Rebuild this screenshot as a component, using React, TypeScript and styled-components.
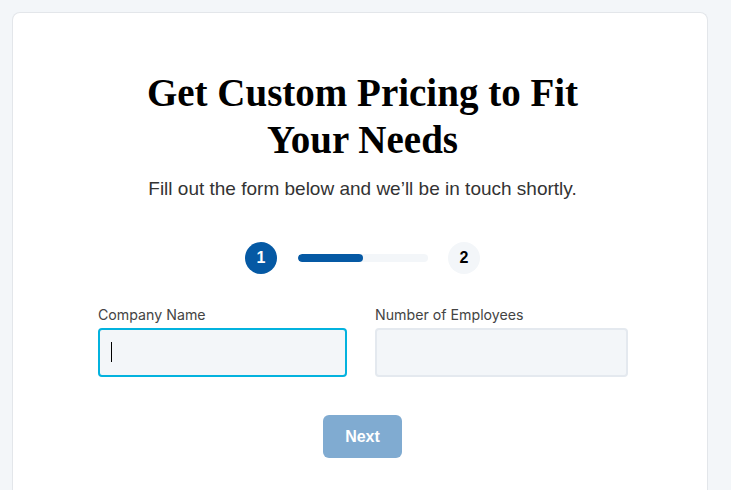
import React, { useState } from "react"
import styled, { createGlobalStyle } from "styled-components"

const GlobalStyle = createGlobalStyle`
  html, body {
    margin: 0;
    padding: 0;
    background: #f3f6f9;
  }
  * {
    box-sizing: border-box;
  }
`

export default function App() {
  const [company, setCompany] = useState("")
  const [employees, setEmployees] = useState("")
  const progress = 50

  return (
    <>
      <GlobalStyle />
      <S.Page>
        <S.Card>
          <S.Title>
            Get Custom Pricing to Fit
            <br />
            Your Needs
          </S.Title>
          <S.Subtitle>Fill out the form below and we’ll be in touch shortly.</S.Subtitle>

          <S.Stepper>
            <S.Step active>1</S.Step>
            <S.Track>
              <S.Fill style={{ width: progress + "%" }} />
            </S.Track>
            <S.Step>2</S.Step>
          </S.Stepper>

          <S.Form>
            <S.Field>
              <S.Label htmlFor="company">Company Name</S.Label>
              <S.InputWrap>
                <S.Input id="company" focused autoFocus value={company} onChange={(e) => setCompany(e.target.value)} />
                {company === "" && <S.Caret />}
              </S.InputWrap>
            </S.Field>
            <S.Field>
              <S.Label htmlFor="employees">Number of Employees</S.Label>
              <S.InputWrap>
                <S.Input id="employees" value={employees} onChange={(e) => setEmployees(e.target.value)} />
              </S.InputWrap>
            </S.Field>
          </S.Form>

          <S.Actions>
            <S.Button disabled>Next</S.Button>
          </S.Actions>
        </S.Card>
      </S.Page>
    </>
  )
}

const S = {
  Page: styled.div`
    padding: 12px 23px 0 12px;
    min-height: 490px;
  `,
  Card: styled.div`
    width: 696px;
    min-height: 490px;
    background: #fff;
    border: 1px solid #e3e6ea;
    border-bottom: none;
    border-radius: 8px 8px 0 0;
    padding: 56px 80px 0 85px;
  `,
  Title: styled.h1`
    margin: 0;
    text-align: center;
    font-family: "Liberation Serif", "Times New Roman", serif;
    font-weight: 700;
    font-size: 39px;
    line-height: 47px;
    color: #000;
  `,
  Subtitle: styled.p`
    margin: 13px 0 0;
    text-align: center;
    font-family: "Liberation Sans", Arial, sans-serif;
    font-size: 19px;
    line-height: 26px;
    color: #333;
  `,
  Stepper: styled.div`
    display: flex;
    align-items: center;
    justify-content: center;
    margin-top: 40px;
  `,
  Step: styled.div<{ active?: boolean }>`
    width: 32px;
    height: 32px;
    border-radius: 50%;
    display: flex;
    align-items: center;
    justify-content: center;
    font-family: "Liberation Sans", Arial, sans-serif;
    font-weight: 700;
    font-size: 16px;
    background: ${(p) => (p.active ? "#0559a4" : "#f3f6f9")};
    color: ${(p) => (p.active ? "#fff" : "#000")};
  `,
  Track: styled.div`
    width: 130px;
    height: 8px;
    margin: 0 20px 0 21px;
    border-radius: 4px;
    background: #f3f6f9;
    overflow: hidden;
  `,
  Fill: styled.div`
    height: 100%;
    border-radius: 4px;
    background: #0559a4;
  `,
  Form: styled.div`
    display: grid;
    grid-template-columns: 249px 253px;
    column-gap: 28px;
    margin-top: 32px;
  `,
  Field: styled.div`
    display: flex;
    flex-direction: column;
  `,
  Label: styled.label`
    font-family: "Inter", "Noto Sans", sans-serif;
    font-size: 14.2px;
    line-height: 18px;
    color: #444;
    margin-bottom: 4px;
  `,
  InputWrap: styled.div`
    position: relative;
  `,
  Input: styled.input<{ focused?: boolean }>`
    display: block;
    height: 49px;
    width: 100%;
    border: 2px solid ${(p) => (p.focused ? "#03b2de" : "#e4e9ef")};
    border-radius: 4px;
    background: #f3f6f9;
    padding: 0 12px;
    font-family: "Liberation Sans", Arial, sans-serif;
    font-size: 16px;
    color: #000;
    outline: none;
    caret-color: ${(p) => (p.focused ? "transparent" : "#000")};
  `,
  Caret: styled.span`
    position: absolute;
    left: 13px;
    top: 14px;
    width: 1px;
    height: 20px;
    background: #000;
    pointer-events: none;
  `,
  Actions: styled.div`
    display: flex;
    justify-content: center;
    margin-top: 38px;
  `,
  Button: styled.button`
    width: 79px;
    height: 43px;
    border: none;
    border-radius: 6px;
    background: #80abd1;
    color: #fff;
    font-family: "Liberation Sans", Arial, sans-serif;
    font-weight: 700;
    font-size: 16px;
    cursor: not-allowed;
  `,
}
